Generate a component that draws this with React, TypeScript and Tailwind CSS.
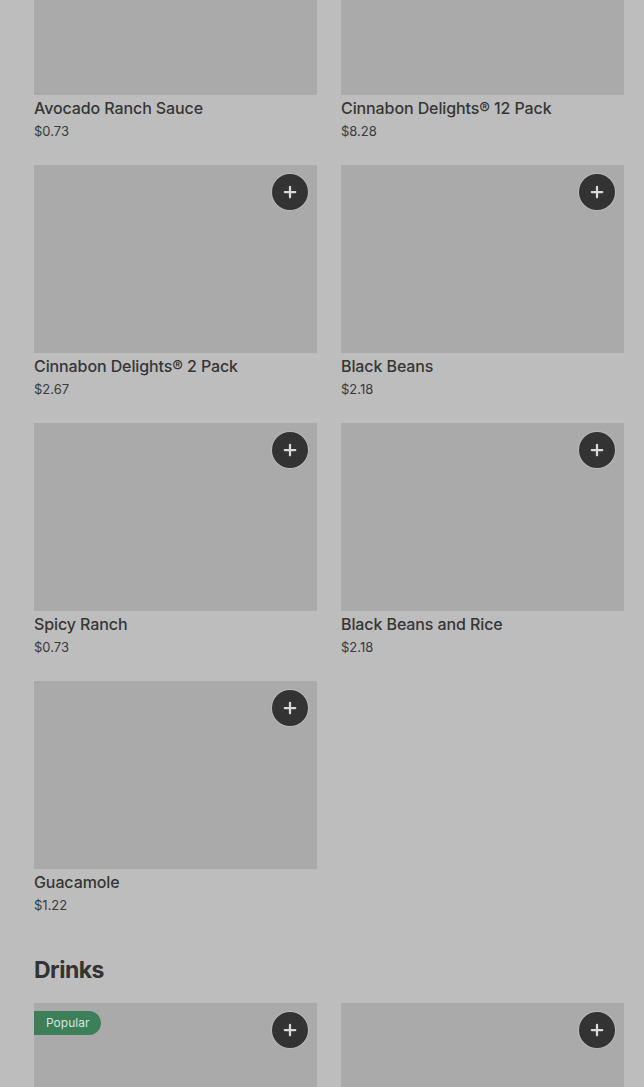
import { Plus } from "lucide-react";

type Item = { name: string; price: string; popular?: boolean };

const sides: Item[] = [
  { name: "Avocado Ranch Sauce", price: "$0.73" },
  { name: "Cinnabon Delights® 12 Pack", price: "$8.28" },
  { name: "Cinnabon Delights® 2 Pack", price: "$2.67" },
  { name: "Black Beans", price: "$2.18" },
  { name: "Spicy Ranch", price: "$0.73" },
  { name: "Black Beans and Rice", price: "$2.18" },
  { name: "Guacamole", price: "$1.22" },
];

const drinks: Item[] = [
  { name: "Baja Blast", price: "$2.49", popular: true },
  { name: "Pepsi", price: "$2.29" },
];

function Photo({ item, hideButton }: { item: Item; hideButton?: boolean }) {
  return (
    <div className="relative h-[188px] bg-[#aaaaaa]">
      {item.popular && (
        <span className="absolute left-0 top-2 flex h-6 items-center rounded-r-full bg-[#3c7f59] pl-3 pr-3 text-[12px] text-[#d6e6dc]">
          Popular
        </span>
      )}
      {!hideButton && (
        <button className="absolute right-[9px] top-[9px] flex h-9 w-9 items-center justify-center rounded-full bg-[#333333] text-[#d9d9d9] shadow-[0_0_0_1px_#b9b9b9]">
          <Plus size={18} strokeWidth={3} />
        </button>
      )}
    </div>
  );
}

function Card({ item, hideButton }: { item: Item; hideButton?: boolean }) {
  return (
    <article className="flex flex-col">
      <Photo item={item} hideButton={hideButton} />
      <div className="pt-[3px]">
        <div className="text-[16px] font-medium leading-5 tracking-[-0.1px] text-[#363636]">{item.name}</div>
        <div className="mt-[3px] text-[13px] leading-[20px] text-[#3a3a3a]">{item.price}</div>
      </div>
    </article>
  );
}

export default function App() {
  return (
    <div className="h-[1087px] overflow-hidden bg-[#bdbdbd] pl-[34px] pr-[20px] font-['Inter',sans-serif]">
      <div className="-mt-[93px] grid grid-cols-2 gap-x-6 gap-y-6">
        {sides.map((item, i) => (
          <Card key={item.name} item={item} hideButton={i < 2} />
        ))}
      </div>
      <h2 className="mt-[39px] text-[23px] font-bold leading-8 tracking-[-0.5px] text-[#333333]">Drinks</h2>
      <div className="mt-[17px] grid grid-cols-2 gap-x-6">
        {drinks.map((item) => (
          <Photo key={item.name} item={item} />
        ))}
      </div>
    </div>
  );
}
